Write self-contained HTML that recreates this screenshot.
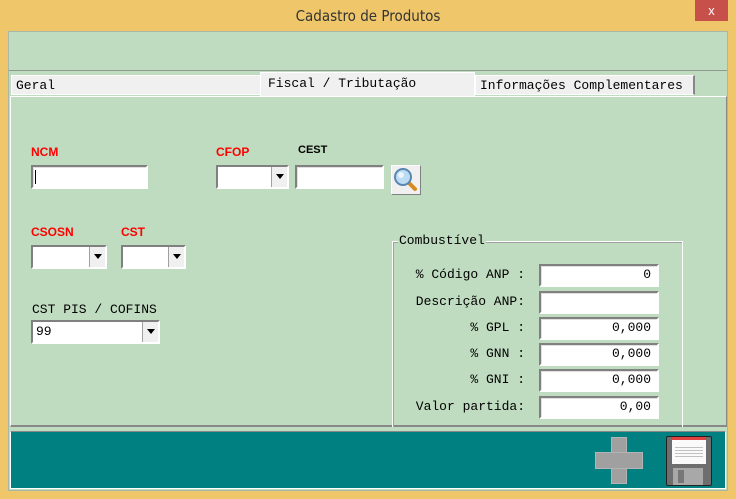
<!DOCTYPE html>
<html><head><meta charset="utf-8"><style>
*{margin:0;padding:0;box-sizing:border-box}
body{width:736px;height:499px;background:#F0C66A;position:relative;overflow:hidden;font-family:"Liberation Sans",sans-serif}
.a{position:absolute}
.title{left:0;top:0;width:736px;height:31px;text-align:center;line-height:32px;font-size:15px;color:#333;font-family:"DejaVu Sans Condensed","Liberation Sans",sans-serif}
.close{left:695px;top:0;width:33px;height:21px;background:#C7504B;color:#fff;text-align:center;font-size:13px;line-height:21px}
.mono{font-family:"Liberation Mono",monospace;font-size:13px;color:#000;font-weight:bold;letter-spacing:0}
.red{color:#f00;font-weight:bold;font-size:12px}
.inp{background:#fff;border:2px solid;border-color:#808080 #fff #fff #808080;box-shadow:inset 1px 1px 0 #e0e0e0}
.sel{background:#fff;border:2px solid;border-color:#808080 #fff #fff #808080}
.sel .btn{position:absolute;right:0;top:0;width:16px;height:100%;background:#F0F0F0;border-left:1px solid #a0a0a0}
.sel .btn:after{content:"";position:absolute;left:4px;top:7px;border-left:4px solid transparent;border-right:4px solid transparent;border-top:5px solid #000}
.num{text-align:right;padding-right:6px;font-family:"Liberation Mono",monospace;font-size:13px;line-height:18px}
.lbl{text-align:right;width:141px;font-family:"Liberation Mono",monospace;font-size:13px}
</style></head><body>
<div class="a title">Cadastro de Produtos</div>
<div class="a close">x</div>
<div class="a" style="left:8px;top:31px;width:720px;height:460px;background:#C0DCC0;border:1px solid #a8b8a8"></div>
<div class="a" style="left:9px;top:32px;width:718px;height:39px;border-bottom:1px solid #909a90"></div>
<div class="a mono" style="left:11px;top:75px;width:250px;height:20px;background:#F0F0F0;border:1px solid #fff;border-right:1px solid #888;font-weight:normal;padding:2px 4px">Geral</div>
<div class="a mono" style="left:260px;top:72px;width:215px;height:25px;background:#F0F0F0;border:1px solid #fff;font-weight:normal;padding:3px 7px">Fiscal / Tributação</div>
<div class="a mono" style="left:475px;top:75px;width:220px;height:20px;background:#F0F0F0;border:1px solid #fff;border-right:2px solid #888;font-weight:normal;padding:2px 4px;white-space:nowrap">Informações Complementares</div>
<div class="a" style="left:10px;top:96px;width:717px;height:331px;border:1px solid #fff;border-right-color:#888;border-bottom:2px solid #888"></div>
<div class="a red" style="left:31px;top:145px">NCM</div>
<div class="a inp" style="left:31px;top:165px;width:117px;height:24px"><div style="position:absolute;left:2px;top:3px;width:1px;height:14px;background:#000"></div></div>
<div class="a red" style="left:216px;top:145px">CFOP</div>
<div class="a sel" style="left:216px;top:165px;width:73px;height:24px"><div class="btn"></div></div>
<div class="a" style="left:298px;top:144px;font-weight:bold;font-size:11px">CEST</div>
<div class="a inp" style="left:295px;top:165px;width:89px;height:24px"></div>
<div class="a" style="left:391px;top:165px;width:30px;height:30px;background:#F0F0F0;border:1px solid;border-color:#fff #808080 #808080 #fff">
<svg width="28" height="28" viewBox="0 0 28 28"><line x1="16" y1="16" x2="23" y2="23" stroke="#d88a20" stroke-width="4" stroke-linecap="round"/><circle cx="11" cy="11" r="8" fill="#bcdcf4" stroke="#5a86b0" stroke-width="2"/><circle cx="9" cy="9" r="3" fill="#fff" opacity=".7"/></svg></div>
<div class="a red" style="left:31px;top:225px">CSOSN</div>
<div class="a sel" style="left:31px;top:245px;width:76px;height:24px"><div class="btn"></div></div>
<div class="a red" style="left:121px;top:225px">CST</div>
<div class="a sel" style="left:121px;top:245px;width:65px;height:24px"><div class="btn"></div></div>
<div class="a mono" style="left:32px;top:302px;font-weight:normal">CST PIS / COFINS</div>
<div class="a sel mono" style="left:31px;top:320px;width:129px;height:24px;font-weight:normal;padding:2px 3px">99<div class="btn"></div></div>
<div class="a" style="left:392px;top:241px;width:291px;height:186px;border:1px solid #fff;border-bottom:none;box-shadow:inset 1px 1px 0 #a0a0a0"></div>
<div class="a mono" style="left:398px;top:233px;background:#C0DCC0;padding:0 1px;font-weight:normal">Combustível</div>
<div class="a lbl" style="left:384px;top:267px">% Código ANP :</div>
<div class="a lbl" style="left:384px;top:294px">Descrição ANP:</div>
<div class="a lbl" style="left:384px;top:320px">% GPL :</div>
<div class="a lbl" style="left:384px;top:346px">% GNN :</div>
<div class="a lbl" style="left:384px;top:372px">% GNI :</div>
<div class="a lbl" style="left:384px;top:399px">Valor partida:</div>
<div class="a inp num" style="left:539px;top:264px;width:120px;height:23px">0</div>
<div class="a inp num" style="left:539px;top:291px;width:120px;height:23px"></div>
<div class="a inp num" style="left:539px;top:317px;width:120px;height:23px">0,000</div>
<div class="a inp num" style="left:539px;top:343px;width:120px;height:23px">0,000</div>
<div class="a inp num" style="left:539px;top:369px;width:120px;height:23px">0,000</div>
<div class="a inp num" style="left:539px;top:396px;width:120px;height:23px">0,00</div>
<div class="a" style="left:10px;top:431px;width:716px;height:58px;background:#008080;border:1px solid #fff;border-top-color:#888"></div>
<div class="a" style="left:611px;top:437px;width:16px;height:47px;background:#a0a0a0;border:1px solid #b4b4b4"></div>
<div class="a" style="left:595px;top:452px;width:48px;height:17px;background:#a0a0a0;border:1px solid #b4b4b4"></div>
<div class="a" style="left:666px;top:436px;width:46px;height:50px;background:#6e6e6e;border:1px solid #222;border-radius:2px"></div>
<div class="a" style="left:672px;top:437px;width:34px;height:27px;background:#fafafa;border-top:3px solid #e04040"></div>
<div class="a" style="left:675px;top:445px;width:28px;height:14px;background:repeating-linear-gradient(#fafafa 0 2px,#c0c0c0 2px 3px)"></div>
<div class="a" style="left:673px;top:468px;width:30px;height:17px;background:#a8a8a8"></div>
<div class="a" style="left:678px;top:470px;width:6px;height:13px;background:#777"></div>
</body></html>
